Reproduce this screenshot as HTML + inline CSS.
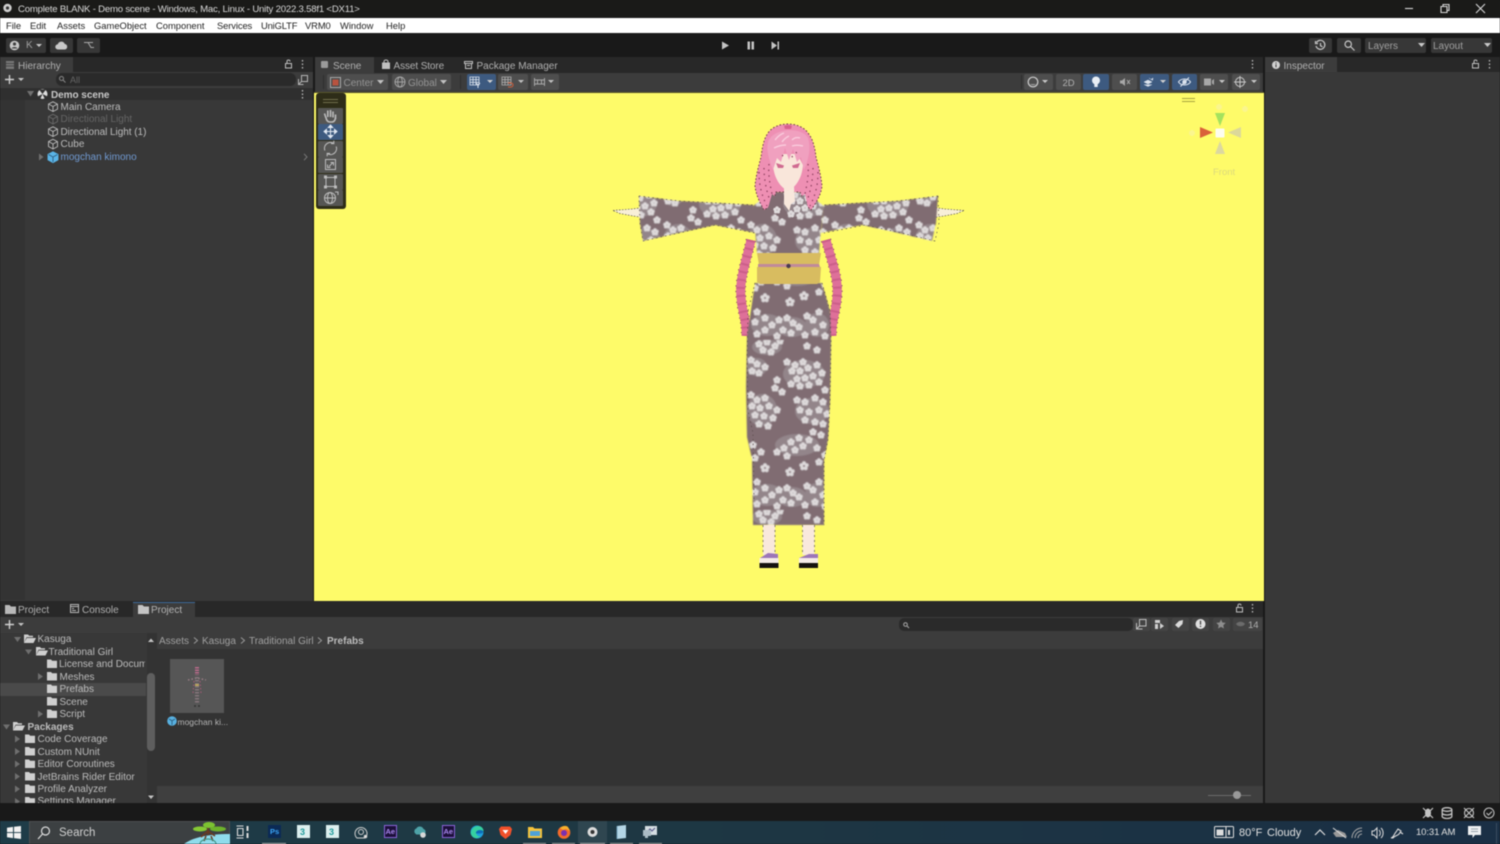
<!DOCTYPE html>
<html lang="en"><head><meta charset="utf-8"><title>Unity</title>
<style>
*{box-sizing:border-box}
html,body{margin:0;padding:0;background:#191919}
#r{position:relative;width:1500px;height:844px;overflow:hidden;background:#191919;font-family:"Liberation Sans",sans-serif;filter:blur(.4px)}
.b{position:absolute}
.t{position:absolute;white-space:nowrap;font-size:10px;line-height:12px;color:#bcbcbc;transform:translateY(1px)}
.m{color:#222;font-size:9.4px}
.btn{position:absolute;background:#373737;border-radius:2px}
.sb{position:absolute;background:#4e4e4e;border-radius:2px;top:74px;height:16px}
.bl{background:#3d5a80}
.tool{position:absolute;left:318px;width:25px;height:16px;background:#565654;border-radius:1px}
svg{position:absolute;overflow:visible}
</style></head><body><div id="r">

<!-- title bar -->
<div class="b" style="left:0;top:0;width:1500px;height:17px;background:#1a1a18"></div>
<svg style="left:2px;top:3px" width="11" height="11" viewBox="0 0 11 11"><circle cx="5.500" cy="5" r="4.200" fill="#cfcfcf"/><circle cx="5.500" cy="5" r="1.600" fill="#333"/></svg>
<div class="t" style="left:18px;top:2.500px;color:#d8d8d8;font-size:9.600px;letter-spacing:-.21px">Complete BLANK - Demo scene - Windows, Mac, Linux - Unity 2022.3.58f1 &lt;DX11&gt;</div>
<svg style="left:1405px;top:3px" width="85" height="12" viewBox="0 0 85 12" fill="none" stroke="#d8d8d8" stroke-width="1.100"><path d="M0 5.500H8"/><path d="M36 3.500h6v6h-6zM38 3.500V1.500h6v6h-2"/><path d="M71 1l9 9M80 1l-9 9"/></svg>

<!-- menu -->
<div class="b" style="left:0;top:18px;width:1500px;height:15px;background:#fff"></div>
<div class="t m" style="left:6px;top:19px">File</div>
<div class="t m" style="left:30px;top:19px">Edit</div>
<div class="t m" style="left:57px;top:19px">Assets</div>
<div class="t m" style="left:94px;top:19px">GameObject</div>
<div class="t m" style="left:156px;top:19px">Component</div>
<div class="t m" style="left:217px;top:19px;letter-spacing:-.1px">Services</div>
<div class="t m" style="left:261px;top:19px;letter-spacing:-.15px">UniGLTF</div>
<div class="t m" style="left:305px;top:19px;letter-spacing:-.1px">VRM0</div>
<div class="t m" style="left:340px;top:19px">Window</div>
<div class="t m" style="left:386px;top:19px">Help</div>

<!-- main toolbar -->
<div class="btn" style="left:6px;top:38px;width:40px;height:15px"></div>
<svg style="left:9px;top:40px" width="34" height="11" viewBox="0 0 34 11"><circle cx="5.500" cy="5.500" r="4.800" fill="#c8c8c8"/><circle cx="5.500" cy="4" r="1.600" fill="#3f3f3f"/><path d="M2.500 8.500c1-2 5-2 6 0" fill="#3f3f3f"/><path d="M27 4h6l-3 3z" fill="#c8c8c8"/></svg>
<div class="t" style="left:26px;top:38.500px;color:#a0a0a0">K</div>
<div class="btn" style="left:50px;top:38px;width:23px;height:15px"></div>
<svg style="left:55px;top:41px" width="13" height="9" viewBox="0 0 13 9"><path d="M3 8.500a2.600 2.600 0 0 1-.2-5.200A3.700 3.700 0 0 1 9.800 3a2.800 2.800 0 0 1 .2 5.500z" fill="#c8c8c8"/></svg>
<div class="btn" style="left:77px;top:38px;width:23px;height:15px"></div>
<svg style="left:83px;top:41px" width="12" height="9" viewBox="0 0 12 9" fill="none" stroke="#a8a8a8"><path d="M1 1.500h4l3 5h3M5 1.500h5"/></svg>

<svg style="left:714px;top:38px" width="75" height="15" viewBox="0 0 75 15" fill="#c4c4c4"><path d="M8 3.500l7 4-7 4z"/><path d="M33.500 3.500h2.500v8h-2.500zM37.500 3.500h2.500v8h-2.500z"/><path d="M57.500 3.500l5.500 4-5.500 4zM63.500 3.500h1.500v8h-1.500z"/></svg>

<div class="btn" style="left:1309px;top:38px;width:23px;height:15px"></div>
<svg style="left:1315px;top:40px" width="11" height="11" viewBox="0 0 11 11" fill="none" stroke="#c8c8c8" stroke-width="1.200"><path d="M1.500 2.500A4.500 4.500 0 1 1 1 6M5.500 3v2.800l2 1"/><path d="M.5 1v2.500H3"/></svg>
<div class="btn" style="left:1337px;top:38px;width:24px;height:15px"></div>
<svg style="left:1344px;top:40px" width="11" height="11" viewBox="0 0 11 11" fill="none" stroke="#c8c8c8" stroke-width="1.200"><circle cx="4.200" cy="4.200" r="3.200"/><path d="M6.500 6.500L10.500 10.500"/></svg>
<div class="btn" style="left:1365px;top:38px;width:61px;height:15px"></div>
<div class="t" style="left:1368px;top:39.500px;color:#a0a0a0">Layers</div>
<svg style="left:1418px;top:43px" width="7" height="4"><path d="M0 0h7L3.500 4z" fill="#c8c8c8"/></svg>
<div class="btn" style="left:1431px;top:38px;width:61px;height:15px"></div>
<div class="t" style="left:1433px;top:39.500px;color:#a0a0a0">Layout</div>
<svg style="left:1484px;top:43px" width="7" height="4"><path d="M0 0h7L3.500 4z" fill="#c8c8c8"/></svg>

<!-- hierarchy panel -->
<div class="b" style="left:0;top:57px;width:313px;height:544px;background:#383838"></div>
<div class="b" style="left:0;top:57px;width:313px;height:15px;background:#282828"></div>
<div class="b" style="left:0;top:57px;width:73px;height:15px;background:#3c3c3c"></div>
<div class="b" style="left:0;top:72px;width:313px;height:16px;background:#3c3c3c"></div>
<div class="b" style="left:0;top:100px;width:25px;height:500px;background:#333"></div>
<div class="b" style="left:0;top:88px;width:313px;height:12px;background:#2f2f2f"></div>
<svg style="left:6px;top:61px" width="8" height="8"><path d="M0 0h8v8H0z" fill="#777"/><path d="M0 2.500h8M0 5h8" stroke="#3c3c3c" stroke-width=".8"/></svg>
<div class="t" style="left:18px;top:60px;color:#b0b0b0">Hierarchy</div>
<svg style="left:285px;top:60px" width="21" height="9" fill="none" stroke="#bdbdbd"><rect x=".5" y="3.500" width="6" height="4.500"/><path d="M2 3.500V1.500a1.500 1.500 0 0 1 3 0"/><path d="M17.500 0v1.500M17.500 3.500v1.500M17.500 7v1.500" stroke-width="1.300"/></svg>
<svg style="left:5px;top:75px" width="20" height="10"><path d="M4.500 0v9M0 4.500h9" stroke="#d0d0d0" stroke-width="1.400"/><path d="M13 3h6l-3 3z" fill="#c4c4c4"/></svg>
<div class="b" style="left:56px;top:73px;width:240px;height:13px;background:#2a2a2a;border-radius:6px"></div>
<svg style="left:59px;top:76px" width="9" height="7" fill="none" stroke="#888"><circle cx="2.500" cy="2.500" r="2"/><path d="M4 4l2.500 2.500"/></svg>
<div class="t" style="left:70px;top:73px;color:#666;font-size:9px">All</div>
<svg style="left:298px;top:75px" width="10" height="10" fill="none" stroke="#b4b4b4"><rect x="3.500" y=".5" width="6" height="6"/><path d="M.5 4v5.500h5M1 9l3-3"/></svg>
<svg style="left:26px;top:89px" width="24" height="10"><path d="M1 2h7L4.500 7.500z" fill="#707070"/><circle cx="16.500" cy="5" r="5" fill="#ddd"/><path d="M16.500 5L13 .5h7zM16.500 5L11.500 7.500l2.500 3zM16.500 5l5 2.500-2.500 3z" fill="#333"/></svg>
<div class="t" style="left:51px;top:88.500px;font-weight:bold;color:#c8c8c8;letter-spacing:-.05px">Demo scene</div>
<svg style="left:301px;top:90px" width="3" height="9"><path d="M1.500 0v1.500M1.500 3.500v1.500M1.500 7v1.500" stroke="#bdbdbd" stroke-width="1.300"/></svg>
<svg style="left:47px;top:101px" width="12" height="62" viewBox="0 0 12 62" fill="none" stroke="#bdbdbd" stroke-width=".9">
<path d="M6 .8l4.500 2.300v5L6 10.500 1.500 8V3zM1.500 3L6 5.500 10.500 3M6 5.500v5"/>
<path d="M6 13.300l4.500 2.300v5L6 23 1.500 20.500v-5zM1.500 15.500L6 18l4.500-2.500M6 18v5" stroke="#6a6a6a"/>
<path d="M6 25.800l4.500 2.300v5L6 35.500 1.500 33v-5zM1.500 28L6 30.500 10.500 28M6 30.500v5"/>
<path d="M6 38.300l4.500 2.300v5L6 48 1.500 45.500v-5zM1.500 40.500L6 43l4.500-2.500M6 43v5"/>
<path d="M6 50.800l5 2.600v5.500L6 61.600 1 58.900v-5.500z" fill="#5ab4e6" stroke="#5ab4e6"/>
<path d="M1.500 53.500L6 56l4.500-2.500M6 56v5" stroke="#2f5f80"/>
</svg>
<div class="t" style="left:60.500px;top:100.500px">Main Camera</div>
<div class="t" style="left:60.500px;top:113px;color:#656565">Directional Light</div>
<div class="t" style="left:60.500px;top:125.500px;letter-spacing:-.04px">Directional Light (1)</div>
<div class="t" style="left:60.500px;top:138px">Cube</div>
<div class="t" style="left:60.500px;top:150.500px;color:#7099d0">mogchan kimono</div>
<svg style="left:38px;top:153px" width="273" height="8"><path d="M1 .5L5.500 4 1 7.500z" fill="#6f6f6f"/><path d="M266 .8l3 3.200-3 3.200" fill="none" stroke="#777"/></svg>

<!-- scene panel -->
<div class="b" style="left:315px;top:57px;width:948px;height:16px;background:#282828"></div>
<div class="b" style="left:315px;top:57px;width:59px;height:16px;background:#3c3c3c"></div>
<svg style="left:321px;top:61px" width="7" height="7"><rect width="7" height="7" rx="1" fill="#9a9a9a"/></svg>
<div class="t" style="left:333px;top:60px;color:#b0b0b0">Scene</div>
<svg style="left:382px;top:60px" width="8" height="9"><path d="M0 2.500h8V9H0z" fill="#c0c0c0"/><path d="M2 3V1.500a2 1.500 0 0 1 4 0V3" fill="none" stroke="#c0c0c0"/></svg>
<div class="t" style="left:393.500px;top:60px;color:#b0b0b0;letter-spacing:-.1px">Asset Store</div>
<svg style="left:464px;top:61px" width="9" height="8" fill="none" stroke="#c0c0c0"><path d="M.5.500h8v2h-8zM1.500 2.500v5h6v-5M3 4.500h3"/></svg>
<div class="t" style="left:476.500px;top:60px;color:#b0b0b0">Package Manager</div>
<svg style="left:1251px;top:60px" width="3" height="9"><path d="M1.500 0v1.500M1.500 3.500v1.500M1.500 7v1.500" stroke="#bdbdbd" stroke-width="1.300"/></svg>
<div class="b" style="left:315px;top:73px;width:948px;height:19px;background:#3c3c3c"></div>

<div class="sb" style="left:327px;width:61px"></div>
<svg style="left:330px;top:77px" width="11" height="11"><rect x=".5" y=".5" width="10" height="10" fill="none" stroke="#a8a8a8"/><rect x="2.500" y="2.500" width="6" height="6" fill="#b8533f"/></svg>
<div class="t" style="left:343.500px;top:76.500px;color:#949494">Center</div>
<svg style="left:377px;top:80px" width="7" height="4"><path d="M0 0h7L3.500 4z" fill="#c0c0c0"/></svg>
<div class="sb" style="left:392px;width:59px"></div>
<svg style="left:394px;top:76px" width="12" height="12" fill="none" stroke="#a8a8a8" stroke-width=".9"><circle cx="6" cy="6" r="5"/><ellipse cx="6" cy="6" rx="2.300" ry="5"/><path d="M1 6h10"/></svg>
<div class="t" style="left:408px;top:76.500px;color:#949494">Global</div>
<svg style="left:440px;top:80px" width="7" height="4"><path d="M0 0h7L3.500 4z" fill="#c0c0c0"/></svg>
<div class="sb bl" style="left:467px;width:29px"></div>
<svg style="left:469px;top:76px" width="24" height="12"><path d="M1 1h9v8H1zM1 3.700h9M1 6.300h9M4 1v8M7 1v8" fill="none" stroke="#dbe3ee" stroke-width=".8"/><path d="M7 7l2 2 2-2M9 9v3" fill="none" stroke="#dbe3ee"/><path d="M18 4h6l-3 3z" fill="#d0d0d0"/></svg>
<div class="sb" style="left:498px;width:30px"></div>
<svg style="left:501px;top:76px" width="24" height="12"><path d="M1 1h9v8H1zM1 3.700h9M1 6.300h9M4 1v8M7 1v8" fill="none" stroke="#b0b0b0" stroke-width=".8"/><path d="M7 7h3a2 2 0 0 1 0 4H7" fill="none" stroke="#d0603c"/><path d="M17 4h6l-3 3z" fill="#c0c0c0"/></svg>
<div class="sb" style="left:531px;width:28px"></div>
<svg style="left:534px;top:77px" width="22" height="10"><path d="M.5 1v8M10.500 1v8M.5 3h10M.5 7h10M3.500 3v4M7.500 3v4" fill="none" stroke="#a8a8a8"/><path d="M14 3h6l-3 3z" fill="#c0c0c0"/></svg>

<div class="sb" style="left:1024px;width:29px"></div>
<svg style="left:1027px;top:76px" width="24" height="12"><circle cx="6" cy="6" r="4.800" fill="none" stroke="#ccc" stroke-width="1.200"/><path d="M3 8a4 4 0 0 0 6 0z" fill="#999"/><path d="M15 4h6l-3 3z" fill="#c8c8c8"/></svg>
<div class="sb" style="left:1056px;width:25px"></div>
<div class="t" style="left:1062.500px;top:76.500px;color:#b0b0b0;font-size:9.500px">2D</div>
<div class="sb bl" style="left:1083px;width:26px"></div>
<svg style="left:1091px;top:76px" width="10" height="12"><circle cx="5" cy="4.500" r="4" fill="#e8eef5"/><path d="M3.300 8h3.400v3H3.300z" fill="#e8eef5"/></svg>
<div class="sb" style="left:1112px;width:25px"></div>
<svg style="left:1120px;top:77px" width="11" height="10"><path d="M0 3.500h2l3-2.500v8L2 6.500H0z" fill="#a8a8a8"/><path d="M7 3l3 4M10 3L7 7" stroke="#a8a8a8"/></svg>
<div class="sb bl" style="left:1140px;width:29px"></div>
<svg style="left:1143px;top:77px" width="24" height="10"><path d="M1 5l4-2 4 2-4 2zM1 7.500l4 2 4-2M6 1l2 1.500 2-1.500-.5 2.500" fill="#dbe3ee" stroke="#dbe3ee" stroke-width=".5"/><path d="M17 3h6l-3 3z" fill="#d0d0d0"/></svg>
<div class="sb bl" style="left:1172px;width:25px"></div>
<svg style="left:1178px;top:77px" width="13" height="10" fill="none" stroke="#dbe3ee" stroke-width="1.100"><path d="M.5 5C3 1 10 1 12.500 5 10 9 3 9 .5 5z"/><circle cx="6.500" cy="5" r="1.700" fill="#dbe3ee"/><path d="M11 .5L2.500 9.500"/></svg>
<div class="sb" style="left:1200px;width:28px"></div>
<svg style="left:1204px;top:78px" width="22" height="8"><path d="M0 .5h7v7H0zM8 2.500l2-1.500v6l-2-1.500z" fill="#a8a8a8"/><path d="M15 2h6l-3 3z" fill="#c8c8c8"/></svg>
<div class="sb" style="left:1232px;width:28px"></div>
<svg style="left:1234px;top:76px" width="24" height="12" fill="none" stroke="#c8c8c8"><circle cx="6" cy="6" r="4.500"/><path d="M6 0v12M0 6h12"/><path d="M17 4h6l-3 3z" fill="#c8c8c8" stroke="none"/></svg>
<div class="b" style="left:1021px;top:75px;width:1px;height:14px;background:#2e2e2e"></div>
<div class="b" style="left:323px;top:75px;width:1px;height:14px;background:#2e2e2e"></div>
<div class="b" style="left:460px;top:75px;width:1px;height:14px;background:#2e2e2e"></div>

<!-- viewport -->
<div class="b" style="left:314px;top:92px;width:949.500px;height:509px;background:#fefb69"></div>
<div class="b" style="left:314px;top:92px;width:950px;height:1px;background:#57552a"></div>

<!-- tool overlay -->
<div class="b" style="left:316px;top:93px;width:30px;height:116px;background:#2e2d18;border-radius:3px"></div>
<div class="b" style="left:323px;top:99px;width:15px;height:1px;background:#6f6e4c"></div>
<div class="b" style="left:323px;top:102px;width:15px;height:1px;background:#6f6e4c"></div>
<div class="tool" style="top:108px"></div>
<div class="tool" style="top:124px;background:#3d5a80"></div>
<div class="tool" style="top:141px"></div>
<div class="tool" style="top:157px"></div>
<div class="tool" style="top:173.500px"></div>
<div class="tool" style="top:190px"></div>
<svg style="left:318px;top:108px" width="25" height="98" viewBox="0 0 25 98" fill="none" stroke="#bcbcbc" stroke-width="1">
<path d="M8 10L6.500 5.500M9.800 9V2.500M12.500 9V2M15 9.500V3.500M17.500 11V6.500M8 9.500c.5 3.500 2 4.500 4 4.500h2c2 0 3.500-2 3.500-5" stroke-width="1.600"/>
<g stroke="#dfe7f2"><path d="M12.500 18.500v10M7.500 23.500h10"/><path d="M12.500 17l-2.200 2.500h4.400zM12.500 30l-2.200-2.500h4.400zM6 23.500l2.500-2.200v4.400zM19 23.500l-2.500-2.200v4.400z" fill="#dfe7f2"/></g>
<path d="M6.800 42.500A6 6 0 0 1 15.500 35.300M18.200 38.500A6 6 0 0 1 9.500 45.700M15.800 32.800v2.800H13M9.200 48.200v-2.800H12" stroke-width="1.100"/>
<path d="M7.500 51.500h10v10h-10zM11 58.500l4-4M12.500 54.500h3v3M9.500 56.500v3h3"/>
<path d="M8 69.500h9v9H8z"/><path d="M6.500 68h2v2h-2zM16.500 68h2v2h-2zM6.500 78h2v2h-2zM16.500 78h2v2h-2z" fill="#bcbcbc"/>
<circle cx="12" cy="90" r="5.500"/><ellipse cx="12" cy="90" rx="2.500" ry="5.500"/><path d="M6.500 90h11"/><path d="M17 84h3v3"/>
</svg>

<!-- gizmo -->
<div class="b" style="left:1182px;top:98px;width:13px;height:1.300px;background:#a7a33f"></div>
<div class="b" style="left:1182px;top:101px;width:13px;height:1.300px;background:#a7a33f"></div>
<svg style="left:1195px;top:104px" width="60" height="60" viewBox="1195 104 60 60">
<path d="M1215 113h10l-5 13z" fill="#a4e25e"/>
<path d="M1200 127l13 5.500-13 5.500z" fill="#d9603a"/>
<path d="M1241 127l-13 5.500 13 5.500z" fill="#dcd89a"/>
<path d="M1215 154l5-13 5 13z" fill="#dcd8a0"/>
<rect x="1215.500" y="128.500" width="9" height="9" rx="1" fill="#fdfdf0"/>
<circle cx="1245" cy="109" r="3" fill="#fbf68e"/><circle cx="1192" cy="133" r="3" fill="#fbf68e"/><circle cx="1219" cy="107" r="3" fill="#fbf68e"/>
</svg>
<div class="t" style="left:1213px;top:165.500px;color:#dcd97d;font-size:9.500px">Front</div>

<!-- character -->
<svg style="left:0;top:0" width="1500" height="844" viewBox="0 0 1500 844">
<defs>
<filter id="soft" x="-5%" y="-5%" width="110%" height="110%"><feGaussianBlur stdDeviation=".45"/></filter>
<g id="f"><circle cx="0" cy="-2.100" r="1.700"/><circle cx="2" cy="-.6" r="1.700"/><circle cx="1.300" cy="1.700" r="1.700"/><circle cx="-1.300" cy="1.700" r="1.700"/><circle cx="-2" cy="-.6" r="1.700"/></g>
<g id="F"><circle cx="0" cy="-2.800" r="1.900"/><circle cx="2.700" cy="-.9" r="1.900"/><circle cx="1.700" cy="2.300" r="1.900"/><circle cx="-1.700" cy="2.300" r="1.900"/><circle cx="-2.700" cy="-.9" r="1.900"/></g>
<pattern id="kim" patternUnits="userSpaceOnUse" width="84" height="170" x="747" y="340">
<rect width="84" height="170" fill="#806c72"/>
<g fill="#93858a">
<ellipse cx="20" cy="7" rx="15" ry="8"/><ellipse cx="10" cy="27" rx="10" ry="9"/><ellipse cx="57" cy="34" rx="21" ry="14"/><ellipse cx="15" cy="70" rx="15" ry="16"/><ellipse cx="65" cy="71" rx="17" ry="13"/><ellipse cx="50" cy="105" rx="22" ry="11"/><ellipse cx="20" cy="155" rx="16" ry="11"/><ellipse cx="45" cy="157" rx="15" ry="10"/><ellipse cx="70" cy="155" rx="12" ry="12"/>
</g>
<g fill="#dedadb">
<use href="#f" x="12" y="4"/><use href="#f" x="20" y="2"/><use href="#f" x="28" y="6"/><use href="#f" x="16" y="10"/><use href="#f" x="24" y="12"/><use href="#f" x="33" y="1"/>
<use href="#f" x="4" y="20"/><use href="#f" x="10" y="24"/><use href="#f" x="5" y="31"/><use href="#f" x="12" y="33"/><use href="#f" x="18" y="27"/>
<use href="#f" x="40" y="22"/><use href="#f" x="48" y="25"/><use href="#f" x="56" y="22"/><use href="#f" x="45" y="31"/><use href="#f" x="53" y="31"/><use href="#f" x="61" y="28"/><use href="#f" x="70" y="25"/><use href="#f" x="50" y="39"/><use href="#f" x="58" y="38"/><use href="#f" x="66" y="36"/><use href="#f" x="75" y="33"/><use href="#f" x="44" y="44"/><use href="#f" x="53" y="46"/><use href="#f" x="62" y="45"/><use href="#f" x="72" y="42"/><use href="#f" x="78" y="50"/><use href="#f" x="70" y="10"/><use href="#f" x="60" y="6"/>
<use href="#f" x="30" y="40"/><use href="#f" x="28" y="48"/><use href="#f" x="35" y="52"/>
<use href="#f" x="4" y="55"/><use href="#f" x="10" y="60"/><use href="#f" x="18" y="58"/><use href="#f" x="5" y="66"/><use href="#f" x="13" y="68"/><use href="#f" x="22" y="66"/><use href="#f" x="30" y="70"/><use href="#f" x="8" y="75"/><use href="#f" x="17" y="76"/><use href="#f" x="26" y="78"/><use href="#f" x="12" y="84"/><use href="#f" x="21" y="86"/>
<use href="#f" x="50" y="60"/><use href="#f" x="58" y="62"/><use href="#f" x="68" y="58"/><use href="#f" x="76" y="62"/><use href="#f" x="53" y="70"/><use href="#f" x="62" y="72"/><use href="#f" x="72" y="70"/><use href="#f" x="80" y="74"/><use href="#f" x="58" y="80"/><use href="#f" x="68" y="82"/><use href="#f" x="76" y="84"/>
<use href="#f" x="30" y="112"/><use href="#f" x="37" y="108"/><use href="#f" x="44" y="102"/><use href="#f" x="52" y="98"/><use href="#f" x="40" y="116"/><use href="#f" x="48" y="110"/><use href="#f" x="56" y="106"/><use href="#f" x="62" y="100"/><use href="#f" x="66" y="92"/><use href="#f" x="74" y="95"/><use href="#f" x="70" y="108"/><use href="#f" x="78" y="115"/>
<use href="#f" x="6" y="105"/><use href="#f" x="14" y="112"/><use href="#f" x="8" y="118"/>
<use href="#F" x="18" y="128"/><use href="#F" x="43" y="132"/><use href="#F" x="57" y="126"/><use href="#f" x="72" y="122"/>
<use href="#f" x="10" y="142"/><use href="#f" x="18" y="148"/><use href="#f" x="8" y="152"/><use href="#f" x="25" y="155"/><use href="#f" x="32" y="150"/><use href="#f" x="40" y="148"/><use href="#f" x="46" y="153"/><use href="#f" x="36" y="160"/><use href="#f" x="44" y="163"/><use href="#f" x="52" y="157"/><use href="#f" x="30" y="166"/><use href="#f" x="18" y="160"/><use href="#f" x="10" y="164"/><use href="#f" x="60" y="146"/><use href="#f" x="66" y="150"/><use href="#f" x="72" y="142"/><use href="#f" x="76" y="155"/><use href="#f" x="68" y="162"/><use href="#f" x="58" y="165"/><use href="#f" x="78" y="166"/>
</g>
</pattern>
</defs>

<!-- hands -->
<path d="M613 210.500L632 209 647 207V218L633 216 620 213.500Z" fill="#f8efd8" stroke="#55504a" stroke-width=".7" stroke-dasharray="1.500 1.500"/>
<path d="M964 210.500L945 209 930 207V218L944 216 957 213.500Z" fill="#f8efd8" stroke="#55504a" stroke-width=".7" stroke-dasharray="1.500 1.500"/>

<!-- braids -->
<g fill="none">
<path d="M751 240C746 262 739 280 741 297 742 312 747 322 746 336" stroke="#7a4456" stroke-width="10.500" stroke-dasharray="1.200 4"/>
<path d="M751 240C746 262 739 280 741 297 742 312 747 322 746 336" stroke="#de7099" stroke-width="9"/>
<path d="M751 240C746 262 739 280 741 297 742 312 747 322 746 336" stroke="#cc5f8a" stroke-width="9" stroke-dasharray="2 6"/>
<path d="M826 240C832 262 839 280 837 297 836 312 831 322 832 336" stroke="#7a4456" stroke-width="10.500" stroke-dasharray="1.200 4"/>
<path d="M826 240C832 262 839 280 837 297 836 312 831 322 832 336" stroke="#de7099" stroke-width="9"/>
<path d="M826 240C832 262 839 280 837 297 836 312 831 322 832 336" stroke="#cc5f8a" stroke-width="9" stroke-dasharray="2 6"/>
</g>

<!-- kimono -->
<g filter="url(#soft)">
<path d="M639 196l40 5 38 2 36 2 3 28-41-8-32 7-40 9-3-18z" fill="url(#kim)"/>
<path d="M938 196l-40 5-38 2-36 2-3 28 41-8 32 7 38 9 4-18z" fill="url(#kim)"/>
<path d="M753 206l18-14 34 0 19 14-3 24-2 24h-62l-2-24z" fill="url(#kim)"/>
<path d="M755 283h67l8 28 1 30-1 60-2 38-4 22v64h-71l-1-66-5-22-1-50 1-50z" fill="url(#kim)"/>
</g>
<g fill="none" stroke="#5a4d4c" stroke-width=".7" stroke-dasharray="1.500 3">
<path d="M639 196l40 5 38 2 36 2M643 241l40-9 32-7 40 8M639 196l1 27 3 18"/>
<path d="M938 196l-40 5-38 2-36 2M935 241l-38-9-32-7-41 8M938 196l1 27-4 18"/>
<path d="M755 283l-7 28-1 50 1 50 5 22 1 66M822 283l8 28 1 30-1 60-2 38-4 22v64"/>
</g>

<!-- obi -->
<path d="M757 253h64l-2 12h-60z" fill="#d8bc60"/>
<path d="M758 264h61l1 3h-62z" fill="#c08a9a"/>
<path d="M757 267h64l-1 15-3 2h-57l-3-2z" fill="#d8bc60"/>
<circle cx="788.500" cy="266" r="2.200" fill="#4a3a50"/>

<!-- legs & sandals -->
<rect x="763" y="525" width="12" height="30" fill="#f9e8dc"/><rect x="802.500" y="525" width="12" height="30" fill="#f9e8dc"/>
<path d="M763 525v28M775 525v28M802.500 525v28M814.500 525v28" stroke="#57514a" stroke-width=".7" stroke-dasharray="2 3"/>
<path d="M760 558l8-5 10 1v4z" fill="#9c76b8"/><path d="M799 558l10-4 9 0v4z" fill="#9c76b8"/>
<rect x="759.500" y="558" width="19" height="5" fill="#f5ebe7"/><rect x="799" y="558" width="19" height="5" fill="#f5ebe7"/>
<rect x="759.500" y="563" width="19" height="5" fill="#16120f"/><rect x="799" y="563" width="19" height="5" fill="#16120f"/>

<!-- hair -->
<path d="M788 124C780 124 772 127 768 133 763 140 762 150 761 157 759 165 756 175 755 186 756 195 760 203 764 210L772 205 776 192H800L806 205 811 210C816 203 821 195 822 186 821 175 818 165 816 157 815 148 813 139 808 133 804 127 796 124 788 124Z" fill="#ee8fb3" stroke="#6b3a48" stroke-width="1" stroke-dasharray="1.500 2"/>
<!-- neck + face -->
<path d="M784 186h10l1 18-5 8-6-8z" fill="#f8e8dc"/>
<path d="M773 165C774 178 780 187 788 191 796 187 802 178 803 165L797 154H779Z" fill="#f9e6da"/>
<path d="M776 163l8 2.500-1 2.500h-5zM800 163l-8 2.500 1 2.500h5z" fill="#d06a90"/>
<!-- bangs -->
<path d="M768 142C766 150 769 160 773 170L777 158 781 162 785 148 789 160 793 149 797 162 801 157 804 170C809 158 811 148 808 138 803 127 773 127 768 142Z" fill="#f0a0bf"/>
<path d="M784 126q4-2 8 0l-1 3h-6z" fill="#d8608e"/>
<g fill="none" stroke="#fbd3e2" stroke-width="1.400" opacity=".85"><path d="M775 140c3-4 6-6 9-7M782 142c2-3 5-5 7-6M792 140c2-2 5-3 8-2M774 148c4-2 8-3 12-3M792 146c3-1 7-1 11 0"/></g>
<g fill="none" stroke="#8a3d5c" stroke-width="1.200" stroke-dasharray="1.400 4.300">
<path d="M759 172C759 186 762 196 767 206"/><path d="M764 168C764 180 767 194 771 203"/><path d="M769 164C768 174 770 186 773 198"/>
<path d="M818 172C818 186 815 196 810 206"/><path d="M813 168C813 180 810 194 806 203"/><path d="M808 164C809 174 807 186 804 198"/>
<path d="M796 152l2 4M792 156l1 3M783 155l-2 3"/>
</g>
<!-- collar -->
<path d="M772 194l12 10 4 12-6 4-14-12zM805 194l-14 10-3 12 6 4 14-12z" fill="url(#kim)"/>
</svg>

<!-- inspector -->
<div class="b" style="left:1265px;top:57px;width:235px;height:746px;background:#383838"></div>
<div class="b" style="left:1265px;top:57px;width:235px;height:15px;background:#282828"></div>
<div class="b" style="left:1265px;top:57px;width:72px;height:15px;background:#3c3c3c"></div>
<svg style="left:1272px;top:61px" width="8" height="8"><circle cx="4" cy="4" r="4" fill="#cfcfcf"/><path d="M4 3.200v3M4 1.500v1" stroke="#3c3c3c"/></svg>
<div class="t" style="left:1283.500px;top:60px;color:#b0b0b0">Inspector</div>
<svg style="left:1472px;top:60px" width="21" height="9" fill="none" stroke="#bdbdbd"><rect x=".5" y="3.500" width="6" height="4.500"/><path d="M2 3.500V1.500a1.500 1.500 0 0 1 3 0"/><path d="M17.500 0v1.500M17.500 3.500v1.500M17.500 7v1.500" stroke-width="1.300"/></svg>

<!-- project panel -->
<div class="b" style="left:0;top:601px;width:1263px;height:202px;background:#333"></div>
<div class="b" style="left:0;top:601px;width:1263px;height:16px;background:#282828"></div>
<div class="b" style="left:133px;top:602px;width:62px;height:15px;background:#3c3c3c;border-top:1px solid #3d6a99"></div>
<div class="b" style="left:0;top:617px;width:1263px;height:16px;background:#3c3c3c"></div>
<div class="b" style="left:0;top:633px;width:155px;height:170px;background:#383838"></div>
<div class="b" style="left:0;top:683px;width:146px;height:12.500px;background:#4a4a4a"></div>
<div class="b" style="left:147px;top:633px;width:8px;height:170px;background:#333"></div>
<div class="b" style="left:147px;top:673px;width:8px;height:78px;background:#5e5e5e;border-radius:4px"></div>
<svg style="left:147px;top:637px" width="8" height="164"><path d="M1 5h6L4 1.500zM1 158.500h6L4 162z" fill="#c4c4c4"/></svg>
<div class="b" style="left:157px;top:633px;width:1106px;height:16px;background:#3c3c3c"></div>
<div class="b" style="left:157px;top:786px;width:1106px;height:17px;background:#3f3f3f"></div>

<svg style="left:5px;top:605px" width="11" height="9"><path d="M0 0h4.500l1.500 1.500H11V9H0z" fill="#b8b8b8"/></svg>
<div class="t" style="left:18px;top:604px;color:#b0b0b0">Project</div>
<svg style="left:70px;top:604px" width="9" height="9" fill="none" stroke="#b8b8b8"><path d="M.5.500h8v8h-8zM.5 2.500h8M2 4.500h2M2 6.500h4"/></svg>
<div class="t" style="left:82px;top:604px;color:#b0b0b0">Console</div>
<svg style="left:138px;top:605px" width="11" height="9"><path d="M0 0h4.500l1.500 1.500H11V9H0z" fill="#c4c4c4"/></svg>
<div class="t" style="left:151px;top:604px;color:#b4b4b4">Project</div>
<svg style="left:1236px;top:604px" width="21" height="9" fill="none" stroke="#bdbdbd"><rect x=".5" y="3.500" width="6" height="4.500"/><path d="M2 3.500V1.500a1.500 1.500 0 0 1 3 0"/><path d="M16.500 0v1.500M16.500 3.500v1.500M16.500 7v1.500" stroke-width="1.300"/></svg>
<svg style="left:5px;top:620px" width="20" height="10"><path d="M4.500 0v9M0 4.500h9" stroke="#d0d0d0" stroke-width="1.400"/><path d="M13 3h6l-3 3z" fill="#c4c4c4"/></svg>

<div class="b" style="left:899px;top:618px;width:234px;height:13px;background:#2a2a2a;border-radius:5px"></div>
<svg style="left:903px;top:622px" width="7" height="6" fill="none" stroke="#a8a8a8"><circle cx="2.500" cy="2.500" r="1.800"/><path d="M4 4l2 2"/></svg>
<div class="btn" style="left:1133px;top:618px;width:17px;height:13px;background:#444"></div>
<div class="btn" style="left:1151px;top:618px;width:17px;height:13px;background:#444"></div>
<div class="btn" style="left:1172px;top:618px;width:17px;height:13px;background:#444"></div>
<div class="btn" style="left:1192px;top:618px;width:17px;height:13px;background:#444"></div>
<div class="btn" style="left:1213px;top:618px;width:17px;height:13px;background:#444"></div>
<div class="btn" style="left:1233px;top:618px;width:29px;height:13px;background:#444"></div>
<svg style="left:1136px;top:619px" width="110" height="11" viewBox="0 0 110 11">
<g fill="none" stroke="#c0c0c0"><rect x="3.500" y=".5" width="6.500" height="6.500"/><path d="M.5 4v6h6M1 9.500l3-3"/></g>
<path d="M19 1h5v3h-5zM19 5h3v5h-3zM24 4l4 3-4 3z" fill="#d0d0d0"/>
<path d="M39 6l4-4 4-1-.5 4-4 4z" fill="#dadada"/>
<circle cx="64.500" cy="5" r="5" fill="#e0e0e0"/><path d="M64.500 1.800v3.800M64.500 6.800v1.200" stroke="#444" stroke-width="1.300"/>
<path d="M85 .5l1.400 3 3.300.4-2.400 2.300.6 3.300-2.900-1.600-2.900 1.600.6-3.300L80.300 3.900l3.300-.4z" fill="#8e8e8e"/>
<path d="M100 5c2-3 7-3 9 0-2 3-7 3-9 0z" fill="#6c6c6c"/>
</svg>
<div class="t" style="left:1248px;top:618.500px;color:#b0b0b0;font-size:9.500px">14</div>

<div class="t" style="left:159px;top:635px;color:#a0a0a0">Assets</div>
<div class="t" style="left:202px;top:635px;color:#a0a0a0">Kasuga</div>
<div class="t" style="left:249px;top:635px;color:#a0a0a0">Traditional Girl</div>
<div class="t" style="left:327px;top:635px;color:#bcbcbc;font-weight:bold">Prefabs</div>
<svg style="left:193px;top:637px" width="130" height="7" fill="none" stroke="#999"><path d="M1 .5l3.500 3L1 6.500M48 .5l3.500 3-3.500 3M125 .5l3.500 3-3.500 3"/></svg>

<!-- tree -->
<svg style="left:0;top:634px" width="60" height="170" viewBox="0 0 60 170">
<defs><path id="fc" d="M0 .5h4l1.200 1.300H10V9H0z"/><path id="fo" d="M0 .5h4l1.200 1.300H9v1.500H2.500L0 9zM0 9l2.800-5H12L9.500 9z"/></defs>
<g fill="#cfcfcf">
<use href="#fo" x="24" y="0"/><use href="#fo" x="36" y="12.500"/>
<use href="#fc" x="47" y="25"/><use href="#fc" x="47" y="37.500"/><use href="#fc" x="47" y="50"/><use href="#fc" x="47" y="62.500"/><use href="#fc" x="47" y="75"/>
<use href="#fo" x="13" y="87.500"/>
<use href="#fc" x="25" y="100"/><use href="#fc" x="25" y="112.500"/><use href="#fc" x="25" y="125"/><use href="#fc" x="25" y="137.500"/><use href="#fc" x="25" y="150"/><use href="#fc" x="25" y="162.500"/>
</g>
<g fill="#6f6f6f">
<path d="M14 3h7l-3.500 5zM25 15.500h7l-3.500 5zM3 90.500h7l-3.500 5z"/>
<path d="M38 39l5 3.500-5 3.500zM38 76.500l5 3.500-5 3.500z"/>
<path d="M15 101.500l5 3.500-5 3.500zM15 114l5 3.500-5 3.500zM15 126.500l5 3.500-5 3.500zM15 139l5 3.500-5 3.500zM15 151.500l5 3.500-5 3.500zM15 164l5 3.500-5 3.500z"/>
</g>
</svg>
<div class="t" style="left:37.500px;top:633px">Kasuga</div>
<div class="t" style="left:48.500px;top:645.500px">Traditional Girl</div>
<div class="b" style="left:59px;top:658px;width:86px;height:14px;overflow:hidden"><div class="t" style="left:0;top:0">License and Documentation</div></div>
<div class="t" style="left:59.500px;top:670.500px">Meshes</div>
<div class="t" style="left:59.500px;top:683px">Prefabs</div>
<div class="t" style="left:59.500px;top:695.500px">Scene</div>
<div class="t" style="left:59.500px;top:708px">Script</div>
<div class="t" style="left:27.500px;top:720.500px;font-weight:bold">Packages</div>
<div class="t" style="left:37.500px;top:733px">Code Coverage</div>
<div class="t" style="left:37.500px;top:745.500px">Custom NUnit</div>
<div class="t" style="left:37.500px;top:758px">Editor Coroutines</div>
<div class="t" style="left:37.500px;top:770.500px">JetBrains Rider Editor</div>
<div class="t" style="left:37.500px;top:783px">Profile Analyzer</div>
<div class="b" style="left:37px;top:795px;width:100px;height:8px;overflow:hidden"><div class="t" style="left:.5px;top:0">Settings Manager</div></div>

<!-- asset thumbnail -->
<div class="b" style="left:170px;top:659px;width:54px;height:54px;background:#565656"></div>
<svg style="left:170px;top:659px" width="54" height="54" fill="none">
<path d="M27 8v8" stroke="#b86a8a" stroke-width="4" stroke-dasharray="1.500 1"/>
<path d="M18 21l9-2 9 2" stroke="#9a7f86" stroke-width="1.500" stroke-dasharray="1.500 2"/>
<path d="M27 18v26" stroke="#85757b" stroke-width="4" stroke-dasharray="1.500 1.500"/>
<path d="M24 22l-1 12M30 22l1 12" stroke="#a85a78" stroke-dasharray="1.500 2"/>
<path d="M25 26h4" stroke="#b9a55c" stroke-width="2"/>
<circle cx="25" cy="47" r="1" fill="#333"/><circle cx="29" cy="47" r="1" fill="#333"/></svg>
<svg style="left:167px;top:716px" width="10" height="10"><circle cx="5" cy="5" r="4.800" fill="#58b0e0"/><path d="M2 3l3 1.800L8 3M5 4.800V9" stroke="#2d5f80" fill="none" stroke-width=".9"/></svg>
<div class="t" style="left:177.500px;top:714.500px;font-size:8.500px;color:#b4b4b4">mogchan ki...</div>

<!-- slider -->
<div class="b" style="left:1208px;top:795px;width:43px;height:1px;background:#6c6c6c"></div>
<div class="b" style="left:1233px;top:791px;width:8px;height:8px;border-radius:50%;background:#999"></div>

<!-- status bar -->
<div class="b" style="left:0;top:803px;width:1500px;height:18px;background:#191919"></div>
<svg style="left:1421px;top:806px" width="75" height="14" viewBox="0 0 75 14">
<path d="M2 2l10 10M12 2L2 12" stroke="#c4c4c4" stroke-width="1.200"/><ellipse cx="7" cy="7" rx="3" ry="4.500" fill="#c4c4c4"/>
<g fill="none" stroke="#c4c4c4" stroke-width="1.300"><ellipse cx="26" cy="3.500" rx="4.800" ry="1.800"/><path d="M21.200 3.500v7c0 1 2 2 4.800 2s4.800-1 4.800-2v-7M21.200 7c0 1 2 2 4.800 2s4.800-1 4.800-2"/></g>
<g fill="none" stroke="#c4c4c4" stroke-width="1.100"><circle cx="48" cy="7" r="4.500"/><path d="M43 2l10 10M53 2L43 12"/></g>
<g fill="none" stroke="#c4c4c4" stroke-width="1"><circle cx="68" cy="7" r="5"/><path d="M65.500 7l2 2 3.500-3.500"/></g>
</svg>

<!-- taskbar -->
<div class="b" style="left:0;top:821px;width:1500px;height:23px;background:linear-gradient(90deg,#1e3c48 0,#1e3843 40%,#1a2f45 100%)"></div>
<svg style="left:7px;top:826px" width="14" height="13"><path d="M0 1.800l6-.9v5.200H0zM7 .8L14 0v6.100H7zM0 7h6v5.100l-6-.9zM7 7h7v6l-7-.9z" fill="#f2f2f2"/></svg>
<div class="b" style="left:29px;top:821px;width:201px;height:23px;background:#3c4042;border:1px solid #4c4f51;border-bottom:0"></div>
<svg style="left:37px;top:826px" width="14" height="14" fill="none" stroke="#dcdcdc" stroke-width="1.200"><circle cx="8.500" cy="5" r="4"/><path d="M5.500 8L1 13"/></svg>
<div class="t" style="left:59px;top:825px;font-size:11.500px;line-height:15px;color:#d0d0d0">Search</div>
<svg style="left:184px;top:821px" width="46" height="23" viewBox="0 0 46 23">
<path d="M0 23c8-6 22-10 46-10v10z" fill="#8fdcec"/>
<path d="M24 5v9M24 10l-7 6M24 10l7 5M22 15l-2 5M27 15l2 5" stroke="#6b3b20" stroke-width="1.500" fill="none"/>
<ellipse cx="25" cy="4" rx="6" ry="3" fill="#7cc331"/><ellipse cx="16" cy="8" rx="7" ry="2.500" fill="#86c934"/><ellipse cx="34" cy="8" rx="8" ry="2.500" fill="#6eb32b"/>
<path d="M16 23a8 5 0 0 1 16 0" fill="none" stroke="#3b8f7c"/>
</svg>
<svg style="left:236px;top:825px" width="14" height="14" fill="none" stroke="#dcdcdc" stroke-width="1.100"><path d="M.5 1h7M.5 13h7M1.500 3.500h5.500v7H1.500z"/><path d="M11.500 1v5M11.500 8v5" stroke-width="2"/></svg>
<div class="b" style="left:268px;top:825px;width:13px;height:13px;background:#0b2a55"></div>
<div class="t" style="left:270px;top:826px;font-size:7.500px;line-height:10px;color:#3aa3f5;font-weight:bold">Ps</div>
<div class="b" style="left:296.500px;top:825px;width:13px;height:13px;background:#dcefef"></div>
<div class="t" style="left:300px;top:826px;font-size:9px;line-height:10px;color:#1f9a9a;font-weight:bold">3</div>
<div class="b" style="left:325.500px;top:825px;width:13px;height:13px;background:#dcefef"></div>
<div class="t" style="left:329px;top:826px;font-size:9px;line-height:10px;color:#1f9a9a;font-weight:bold">3</div>
<svg style="left:354px;top:825px" width="14" height="14" fill="none" stroke="#cfcfcf"><path d="M3 13a6 6 0 1 1 8 0z"/><circle cx="7" cy="7" r="2.500"/><circle cx="11.500" cy="11.500" r="1.300" fill="#eee"/></svg>
<div class="b" style="left:383.500px;top:825px;width:13px;height:13px;background:#1c0f3a;border:1px solid #8a63d8"></div>
<div class="t" style="left:385.500px;top:826px;font-size:7.500px;line-height:10px;color:#a98af0;font-weight:bold">Ae</div>
<svg style="left:413px;top:826px" width="14" height="12"><path d="M3 8a3 3 0 0 1 .3-5.500A4 4 0 0 1 10.500 3 3 3 0 0 1 11 8.500H3z" fill="#4ea3a8"/><circle cx="10" cy="9" r="2.800" fill="#d8d8d8"/></svg>
<div class="b" style="left:441.500px;top:825px;width:13px;height:13px;background:#1c0f3a;border:1px solid #8a63d8"></div>
<div class="t" style="left:443.500px;top:826px;font-size:7.500px;line-height:10px;color:#a98af0;font-weight:bold">Ae</div>
<svg style="left:470px;top:825px" width="14" height="14"><circle cx="7" cy="7" r="6.500" fill="#1d9ee0"/><path d="M.8 7.500C1.500 3 5 1 8 1c3 0 5.500 2 5.500 5 0 1.500-1 2.500-3 2.500H6.500c0 2 2 3 4 2.500-1 2-5 3-7.500 1C1.500 11 .8 9.500.8 7.500z" fill="#36d0a0"/><path d="M13.500 6.500C13 8 12 8.500 10.500 8.500H6c-.5-2 1.500-3.500 4-3.500 1.500 0 3 .5 3.500 1.500z" fill="#0e6cb8"/></svg>
<svg style="left:499px;top:825px" width="13" height="14"><path d="M2 1.500h9l2 2.500-1.500 6L6.500 14 1.500 10 0 4z" fill="#f1502a"/><path d="M6.500 9l-3-4h6z" fill="#fff"/></svg>
<svg style="left:528px;top:826px" width="14" height="12"><path d="M0 1h5l1.500 1.500H14V12H0z" fill="#f5c33b"/><rect x="2" y="5" width="10" height="5" fill="#4ea1d6"/></svg>
<svg style="left:557px;top:825px" width="14" height="14"><circle cx="7" cy="7.500" r="6.300" fill="#f46b2a"/><path d="M3 3c2-2 6-3 8-1l2 4-4-2-3 1z" fill="#f8b02c"/><circle cx="7" cy="8" r="3" fill="#7c2fb0"/></svg>
<div class="b" style="left:578px;top:821px;width:29px;height:23px;background:#2f4650"></div>
<svg style="left:587px;top:826px" width="11" height="12"><circle cx="5.500" cy="6" r="5" fill="#dcdcdc"/><circle cx="5.500" cy="6" r="2" fill="#333"/></svg>
<svg style="left:616px;top:825px" width="11" height="14"><path d="M1 1l9-1v13l-9 1z" fill="#b4d6e6"/><path d="M1 1v13" stroke="#6fa0b8"/></svg>
<svg style="left:643px;top:826px" width="14" height="12"><path d="M2 0h12v9H2z" fill="#d4dde2"/><path d="M4 6l3-3 2 2 3-3" stroke="#558" fill="none"/><path d="M0 4h8v6H5v2H2v-2H0z" fill="#aabbc4"/></svg>
<div class="b" style="left:262px;top:842.500px;width:24px;height:1.500px;background:#bbb"></div>
<div class="b" style="left:523px;top:842.500px;width:23px;height:1.500px;background:#aaa"></div>
<div class="b" style="left:552px;top:842.500px;width:23px;height:1.500px;background:#aaa"></div>
<div class="b" style="left:580px;top:842.500px;width:25px;height:1.500px;background:#bbb"></div>
<div class="b" style="left:610px;top:842.500px;width:23px;height:1.500px;background:#aaa"></div>
<div class="b" style="left:639px;top:842.500px;width:23px;height:1.500px;background:#aaa"></div>

<svg style="left:1214px;top:826px" width="20" height="12" fill="none" stroke="#dcdcdc"><rect x=".5" y=".5" width="19" height="11" rx="1"/><rect x="3" y="4" width="6" height="5" fill="#dcdcdc"/><path d="M12 1v10"/><path d="M15 4v5" stroke-width="2"/></svg>
<div class="t" style="left:1239px;top:825.500px;font-size:11px;color:#e0e0e0">80°F</div>
<div class="t" style="left:1267px;top:825.500px;font-size:11px;color:#e0e0e0">Cloudy</div>
<svg style="left:1314px;top:827px" width="94" height="12" viewBox="0 0 94 12" fill="none" stroke="#dcdcdc">
<path d="M1 8l5-5 5 5" stroke-width="1.200"/>
<path d="M19 6l5-3 7 3 2 4H22z" fill="#999" stroke="none"/><path d="M19 1l13 10"/>
<path d="M38 11a10 10 0 0 1 10-10M41 11a7 7 0 0 1 7-7M44 11a4 4 0 0 1 4-4" stroke="#aaa"/>
<path d="M58 4h2l3-3v10l-3-3h-2zM65 3a4 4 0 0 1 0 6M67 1a7 7 0 0 1 0 10"/>
<path d="M77 11c3-1 3-4 5-6l2-3 3 2-2 3c-2 2-5 2-6 4zM86 5l3 2" stroke-width="1.100"/>
</svg>
<div class="t" style="left:1416px;top:825.500px;font-size:9.500px;letter-spacing:-.1px;color:#e0e0e0">10:31 AM</div>
<svg style="left:1468px;top:826px" width="13" height="12"><path d="M0 0h13v9H7l-2.500 3V9H0z" fill="#eef0f2"/><path d="M3 3h7M3 5.500h7" stroke="#7f8b95" stroke-width=".7"/></svg>
<div class="b" style="left:1496px;top:823px;width:1px;height:21px;background:#3a4d60"></div>
</div></body></html>
